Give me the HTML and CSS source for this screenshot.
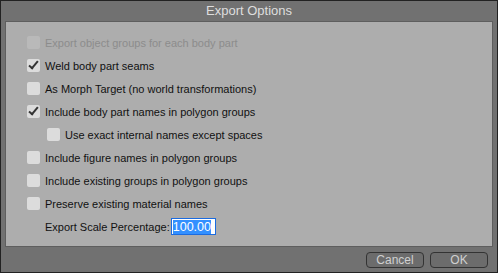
FILE: index.html
```html
<!DOCTYPE html>
<html lang="en">
<head>
  <meta charset="UTF-8" />
  <title>Export Options</title>
  <link rel="stylesheet" href="styles.css">
</head>
<body>
  <div class="dialog">
    <div class="title-bar">Export Options</div>

    <div class="panel">
      <label class="option disabled">
        <span class="box"></span>
        <span>Export object groups for each body part</span>
      </label>
      <label class="option">
        <span class="box checked"></span>
        <span>Weld body part seams</span>
      </label>
      <label class="option">
        <span class="box"></span>
        <span>As Morph Target (no world transformations)</span>
      </label>
      <label class="option">
        <span class="box checked"></span>
        <span>Include body part names in polygon groups</span>
      </label>
      <label class="option sub">
        <span class="box"></span>
        <span>Use exact internal names except spaces</span>
      </label>
      <label class="option">
        <span class="box"></span>
        <span>Include figure names in polygon groups</span>
      </label>
      <label class="option">
        <span class="box"></span>
        <span>Include existing groups in polygon groups</span>
      </label>
      <label class="option">
        <span class="box"></span>
        <span>Preserve existing material names</span>
      </label>
      <div class="option scale">
        <span>Export Scale Percentage:</span>
        <span class="field"><span class="selected">100.00</span></span>
      </div>
    </div>

    <div class="buttons">
      <button>Cancel</button>
      <button>OK</button>
    </div>
  </div>
</body>
</html>
```

FILE: styles.css
```css
body {
  margin: 0;
  background: #000;
  font-family: Tahoma, "Liberation Sans", "DejaVu Sans", sans-serif;
}

.dialog {
  width: 496px;
  height: 271px;
  border: 1px solid #222;
  background: #717171;
  display: flex;
  flex-direction: column;
}

.title-bar {
  height: 20px;
  line-height: 20px;
  text-align: center;
  color: #dedede;
  font-size: 13px;
}

.panel {
  margin: 0 4px;
  height: 226px;
  background: #adadad;
  border: 1px solid #5e5e5e;
  padding-top: 9px;
  box-sizing: border-box;
}

.option {
  display: flex;
  align-items: center;
  gap: 5px;
  height: 23px;
  padding-left: 21px;
  font-size: 11px;
  color: #111;
}

.option.sub {
  padding-left: 41px;
}

.option.disabled {
  color: #8c8c8c;
}

.box {
  width: 13px;
  height: 13px;
  border-radius: 2px;
  background: #dcdcdc;
  position: relative;
}

.disabled .box {
  background: #b9b9b9;
}

.box.checked::after {
  content: "";
  position: absolute;
  left: 4px;
  top: 0px;
  width: 3px;
  height: 8px;
  border: solid #333;
  border-width: 0 2px 2px 0;
  transform: rotate(40deg);
}

.scale {
  padding-left: 39px;
  gap: 1px;
}

.field {
  width: 41px;
  height: 15px;
  border: 1px solid #1b6be0;
  background: #fff;
  padding: 0 1px;
  display: flex;
  align-items: center;
  font-size: 12.5px;
}

.selected {
  background: #3390ff;
  color: #fff;
  line-height: 14px;
}

.buttons {
  display: flex;
  justify-content: flex-end;
  gap: 6px;
  padding: 5px 9px 0 0;
}

button {
  width: 58px;
  height: 16px;
  padding: 0;
  border: 1px solid #333;
  border-radius: 4px;
  background: #6c6c6c;
  color: #d0d0d0;
  font-family: inherit;
  font-size: 12px;
  line-height: 14px;
}
```
